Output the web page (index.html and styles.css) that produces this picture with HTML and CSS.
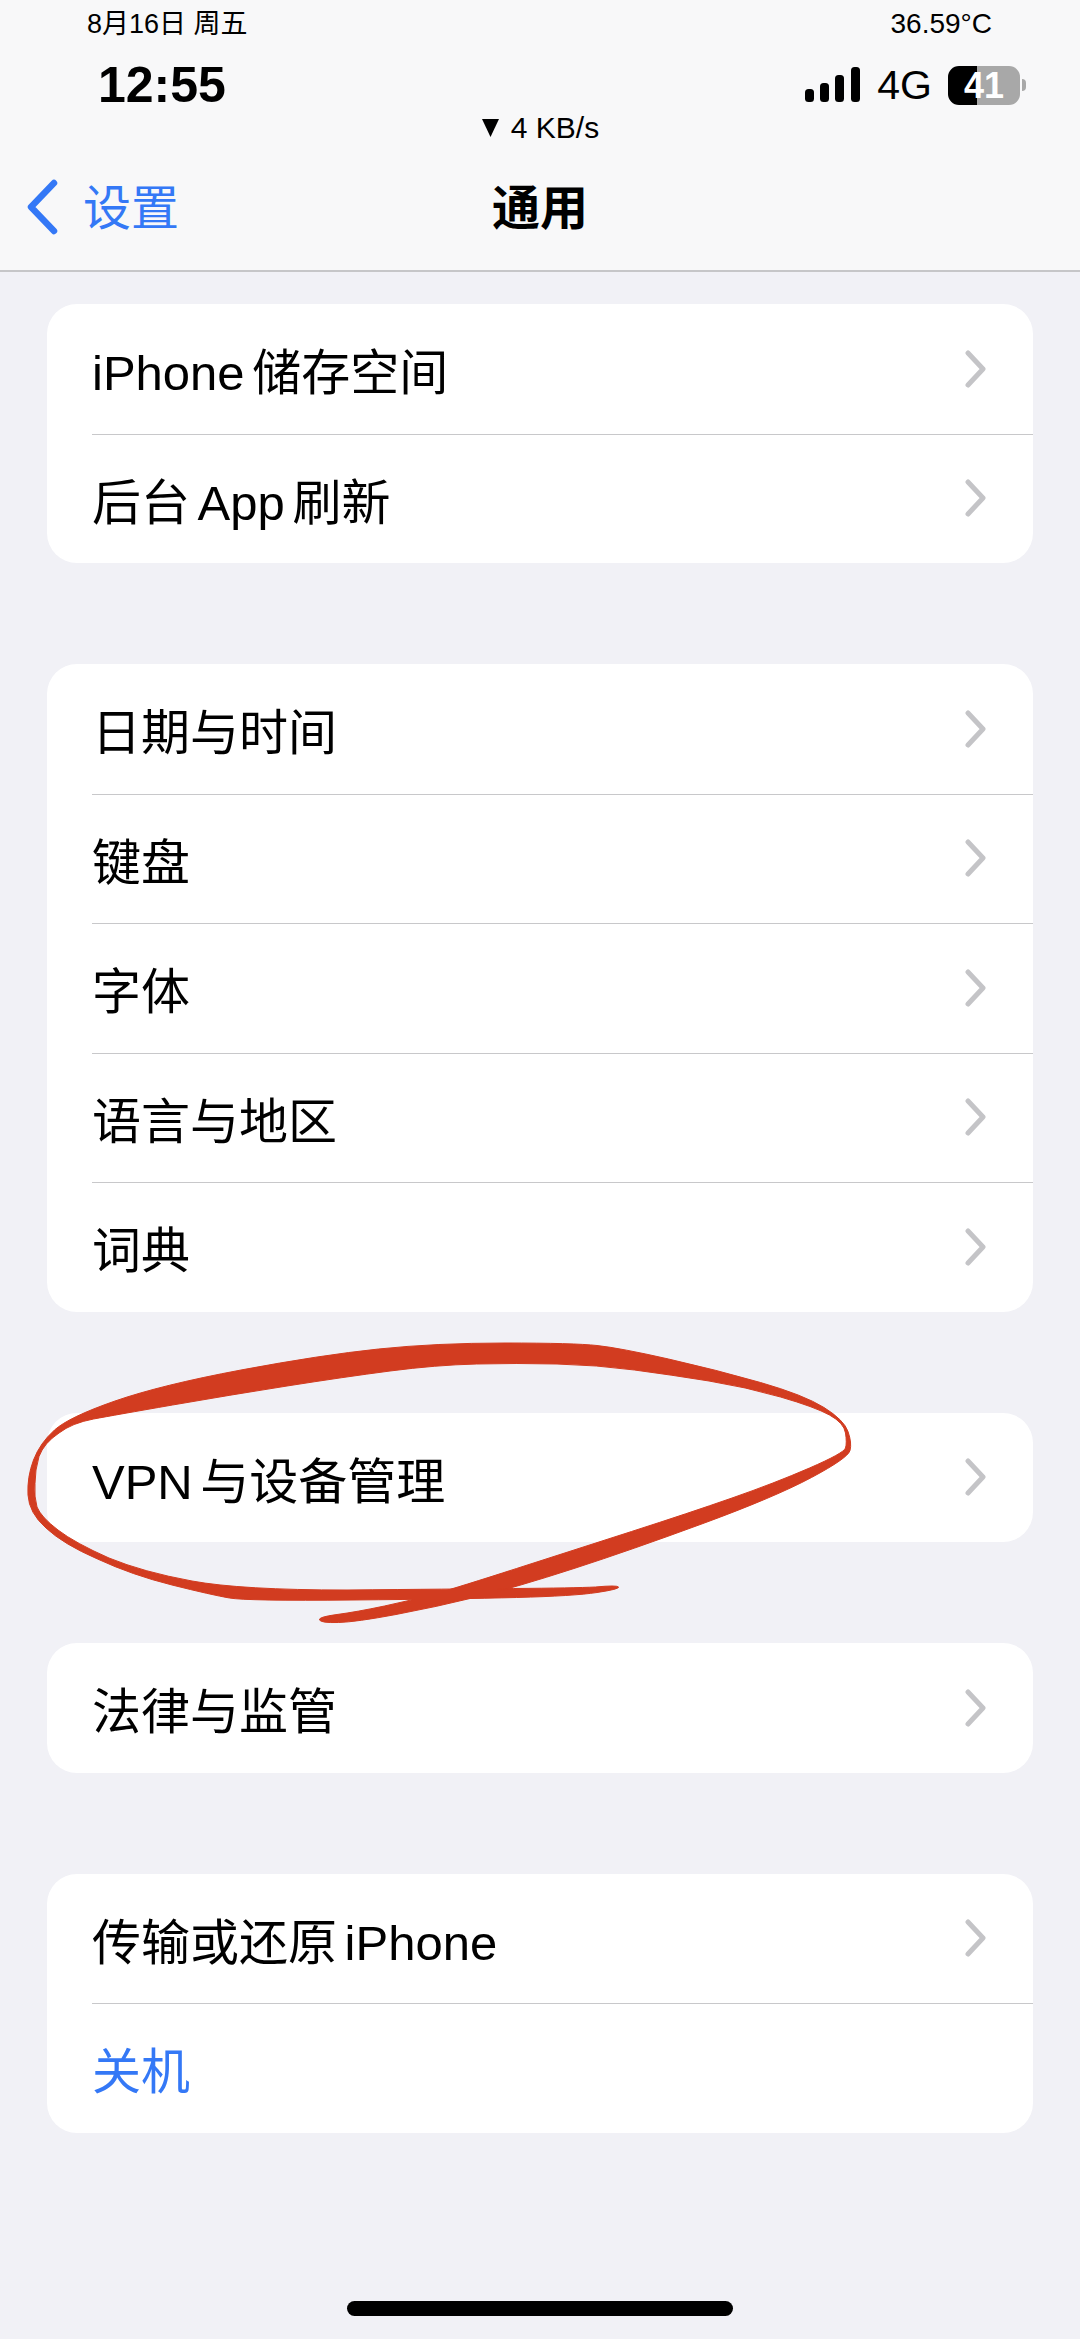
FILE: index.html
```html
<!DOCTYPE html>
<html lang="zh-CN">
<head>
  <meta charset="UTF-8" />
  <meta name="viewport" content="width=device-width, initial-scale=1.0"/>
  <title>通用</title>
  <link rel="stylesheet" href="styles.css">
</head>
<body>
  <svg width="0" height="0" class="defs">
    <symbol id="chevron" viewBox="0 0 24 38">
      <path d="M4 3 L19 19 L4 35" fill="none" stroke="currentColor" stroke-width="5" stroke-linecap="round" stroke-linejoin="round"/>
    </symbol>
  </svg>

  <div class="page">
    <header class="top">
      <div class="status-info">
        <span class="date">8月16日 周五</span>
        <span class="temp">36.59°C</span>
      </div>
      <div class="status-main">
        <span class="clock">12:55</span>
        <div class="status-right">
          <svg class="signal" width="56" height="36" viewBox="0 0 56 36">
            <rect x="0" y="22" width="9" height="13" rx="3.5"/>
            <rect x="15" y="16" width="9" height="19" rx="3.5"/>
            <rect x="30" y="8" width="9" height="27" rx="3.5"/>
            <rect x="46" y="0" width="9" height="35" rx="3.5"/>
          </svg>
          <span class="network">4G</span>
          <div class="battery">41</div>
          <div class="battery-nub"></div>
        </div>
      </div>
      <div class="speed">
        <svg width="19" height="18" viewBox="0 0 19 18"><polygon points="1,0 18,0 9.5,18"/></svg>
        <span>4 KB/s</span>
      </div>
      <nav class="nav">
        <a class="back">
          <svg width="34" height="58" viewBox="0 0 34 58">
            <path d="M29 5 L6 29 L29 53" fill="none" stroke="currentColor" stroke-width="6.5" stroke-linecap="round" stroke-linejoin="round"/>
          </svg>
          <span class="back-label">设置</span>
        </a>
        <h1>通用</h1>
      </nav>
    </header>

    <main class="list">
      <section class="card">
        <div class="row"><span>iPhone 储存空间</span><svg class="chev"><use href="#chevron"/></svg></div>
        <div class="row"><span>后台 App 刷新</span><svg class="chev"><use href="#chevron"/></svg></div>
      </section>

      <section class="card">
        <div class="row"><span>日期与时间</span><svg class="chev"><use href="#chevron"/></svg></div>
        <div class="row"><span>键盘</span><svg class="chev"><use href="#chevron"/></svg></div>
        <div class="row"><span>字体</span><svg class="chev"><use href="#chevron"/></svg></div>
        <div class="row"><span>语言与地区</span><svg class="chev"><use href="#chevron"/></svg></div>
        <div class="row"><span>词典</span><svg class="chev"><use href="#chevron"/></svg></div>
      </section>

      <section class="card">
        <div class="row"><span>VPN 与设备管理</span><svg class="chev"><use href="#chevron"/></svg></div>
      </section>

      <section class="card">
        <div class="row"><span>法律与监管</span><svg class="chev"><use href="#chevron"/></svg></div>
      </section>

      <section class="card">
        <div class="row"><span>传输或还原 iPhone</span><svg class="chev"><use href="#chevron"/></svg></div>
        <div class="row row-link"><span>关机</span></div>
      </section>
    </main>

    <div class="home-bar"></div>

    <!-- hand drawn circle on top of the screenshot -->
    <svg class="scribble" width="1080" height="2339" viewBox="0 0 1080 2339">
      <path d="M337 1614.5 Q356 1612 384.5 1606 Q413 1600 436 1593.5 Q459 1587 516.5 1568.5 Q574 1550 631.5 1531.5 Q689 1513 732 1498 Q775 1483 809.5 1468 Q844 1453 845.5 1448 Q847 1443 845.5 1433 Q844 1423 829.5 1415 Q815 1407 780.5 1397 Q746 1387 709 1381 Q672 1375 634.5 1370 Q597 1365 557 1364 Q517 1363 476.5 1364 Q436 1365 390 1371 Q344 1377 287 1386 Q230 1395 172.5 1405 Q115 1415 93.5 1419 Q72 1423 59 1433 Q44 1443 39 1456.5 Q35 1470 35 1483.5 Q34 1497 37 1507 Q41 1517 58 1530 Q75 1543 109 1558 Q143 1572 192 1581 Q241 1590 347 1590 Q453 1589 513.5 1588.5 Q574 1588 595.5 1587 Q617 1585 618.5 1587 Q620 1589 597 1592.5 Q574 1596 516.5 1597.5 Q459 1599 353 1600 Q247 1601 229.5 1598 Q212 1595 172 1585 Q132 1575 97.5 1559 Q63 1544 46 1528 Q29 1513 28 1495 Q27 1477 33.5 1460 Q40 1443 54.5 1430 Q69 1417 115 1401 Q161 1385 241 1370 Q321 1355 378.5 1349 Q436 1343 505 1343 Q574 1343 597 1345.5 Q620 1348 668.5 1359 Q717 1370 760.5 1382.5 Q804 1395 824 1407.5 Q844 1420 848 1431.5 Q852 1443 850 1450.5 Q848 1458 811.5 1477.5 Q775 1497 703 1523.5 Q631 1550 574 1568.5 Q517 1587 476.5 1597 Q436 1607 396 1614.5 Q356 1622 338.5 1622.5 Q321 1623 319.5 1620 Q318 1617 337 1614.5 Z"/>
    </svg>
  </div>
</body>
</html>
```

FILE: styles.css
```css
* {
  box-sizing: border-box;
}

body {
  margin: 0;
  background: #f1f1f6;
  font-family: "Liberation Sans", "Noto Sans CJK SC", sans-serif;
  color: #000;
}

.defs {
  position: absolute;
}

.page {
  position: relative;
  width: 1080px;
  height: 2339px;
  overflow: hidden;
}

.top {
  height: 272px;
  background: #f8f8f9;
  border-bottom: 2px solid #c6c6c8;
}

.status-info {
  display: flex;
  justify-content: space-between;
  height: 57px;
  padding: 9px 88px 0 87px;
  line-height: 30px;
}

.date {
  font-size: 27px;
}

.temp {
  font-size: 28px;
}

.status-main {
  display: flex;
  justify-content: space-between;
  align-items: center;
  height: 56px;
  padding: 0 54px 0 98px;
}

.clock {
  font-size: 50px;
  font-weight: 700;
}

.status-right {
  display: flex;
  align-items: center;
}

.signal {
  fill: #000;
}

.network {
  margin: 0 16px 0 16px;
  font-size: 41px;
}

.battery {
  width: 72px;
  height: 39px;
  border-radius: 11px;
  background: linear-gradient(to right, #000 40%, #a8a8a8 40%);
  color: #fff;
  font-size: 36px;
  font-weight: 700;
  line-height: 39px;
  text-align: center;
}

.battery-nub {
  width: 4px;
  height: 12px;
  margin-left: 2px;
  border-radius: 0 4px 4px 0;
  background: #a8a8a8;
}

.speed {
  display: flex;
  align-items: center;
  justify-content: center;
  gap: 11px;
  height: 30px;
  font-size: 30px;
  line-height: 30px;
}

.nav {
  position: relative;
  display: flex;
  align-items: center;
  justify-content: center;
  height: 68px;
  margin-top: 30px;
}

.back {
  position: absolute;
  left: 25px;
  display: flex;
  align-items: center;
  gap: 24px;
  color: #3478f6;
  font-size: 48px;
}

.back-label {
  margin-bottom: 6px;
}

.nav h1 {
  margin: 0 0 6px;
  font-size: 48px;
  font-weight: 700;
}

.list {
  display: flex;
  flex-direction: column;
  gap: 101px;
  padding: 32px 47px 0;
}

.card {
  background: #fff;
  border-radius: 30px;
  overflow: hidden;
}

.row {
  display: flex;
  align-items: center;
  justify-content: space-between;
  height: 129.5px;
  padding: 0 45px 0 45px;
  font-size: 49px;
  word-spacing: -6px;
}

.row + .row {
  position: relative;
}

.row + .row::before {
  content: "";
  position: absolute;
  top: 0;
  left: 45px;
  right: 0;
  border-top: 1.5px solid #c8c8ca;
}

.row-link {
  color: #3478f6;
}

.chev {
  width: 24px;
  height: 38px;
  color: #c4c4c7;
}

.home-bar {
  width: 386px;
  height: 15px;
  margin: 168px auto 0;
  border-radius: 8px;
  background: #000;
}

.scribble {
  position: absolute;
  top: 0;
  left: 0;
  fill: #d23c20;
  stroke: #d23c20;
  stroke-width: 1;
  stroke-linejoin: round;
  pointer-events: none;
}
```
